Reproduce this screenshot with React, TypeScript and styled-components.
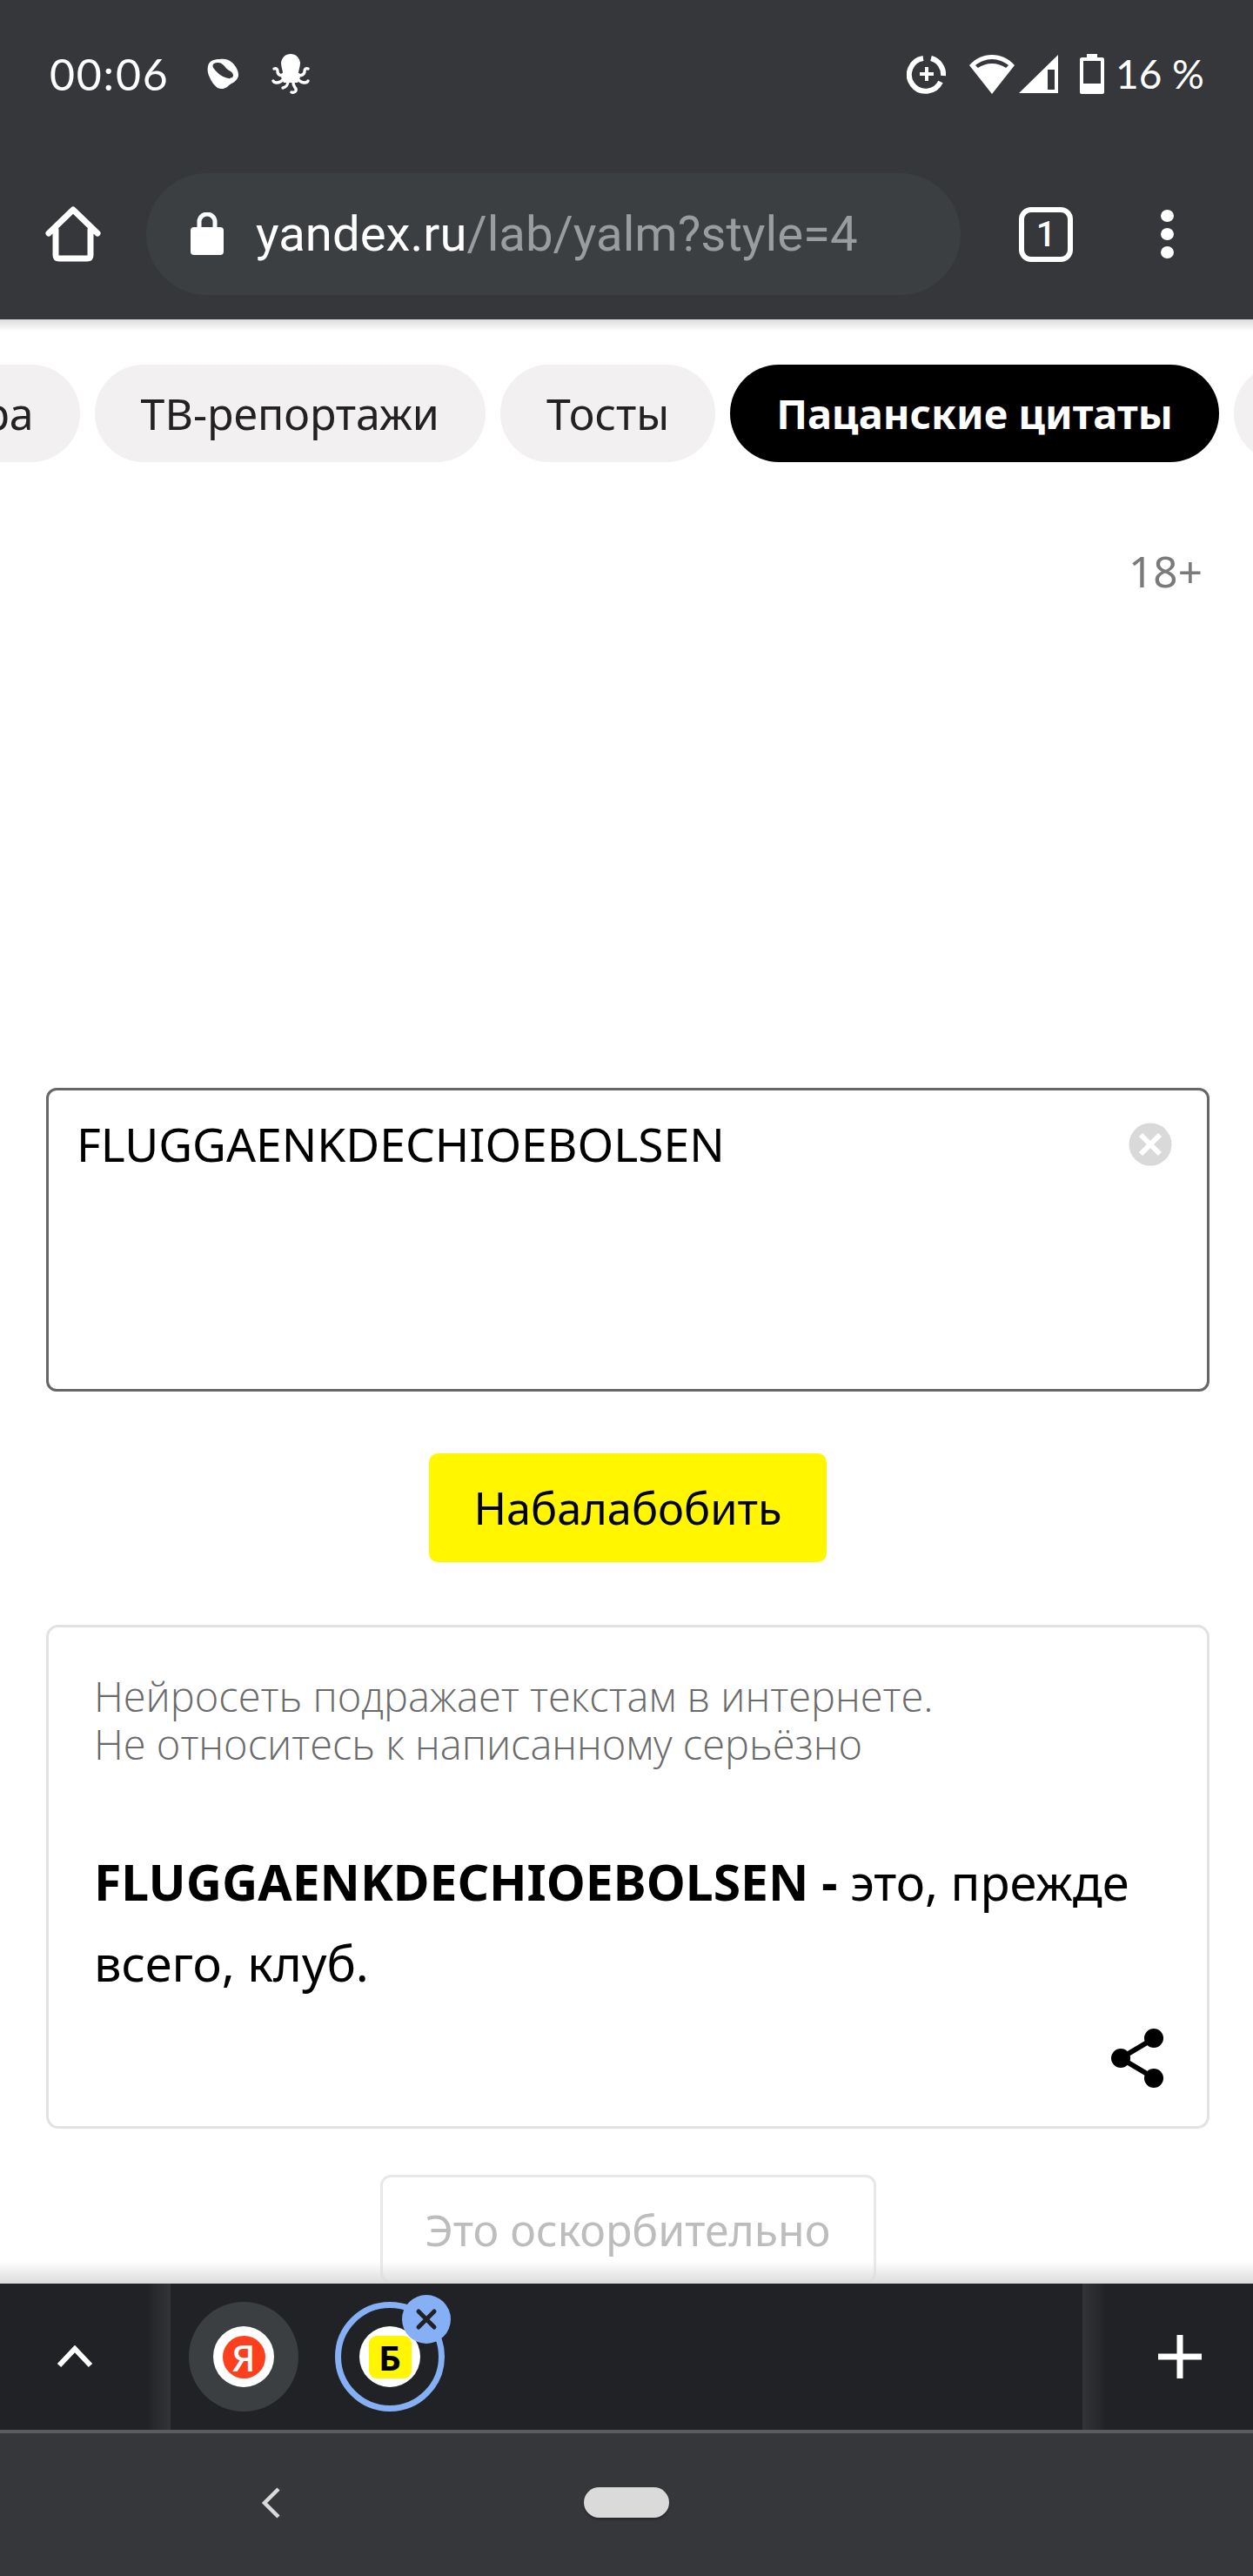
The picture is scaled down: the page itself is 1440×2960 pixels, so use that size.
import styled, { createGlobalStyle } from "styled-components";

const GlobalStyle = createGlobalStyle`
    html, body {
        margin: 0;
        padding: 0;
        background: #fff;
    }
    * {
        box-sizing: border-box;
    }
`

function App() {
    const chips = ['Литература', 'ТВ-репортажи', 'Тосты']

    return (
        <>
            <GlobalStyle />
            <Screen>
                <Chrome>
                    <StatusBar>
                        <StatusLeft>
                            <Clock>00:06</Clock>
                            <svg width="37" height="36" viewBox="0 0 37 36">
                                <path fill="#fff" fillRule="evenodd" d="M1 9C2 3 8 1 14 1c6-1 11 0 15 4 4 4 7 9 7 14 0 4-3 7-6 9-3 1-5 3-7 5-3 2-7 3-11 1-4-3-7-7-9-12C1 18 0 13 1 9Zm7-3C6 7 6 10 8 12c3 4 7 8 13 10 3 1 6 2 8 0 2-2 1-5-2-7-3-2-5-3-7-6-2-2-4-4-7-4-2 0-4 0-5 1Z" />
                            </svg>
                            <Octopus viewBox="0 0 44 46" width="44" height="46">
                                <path fill="#fff" d="M22 0c6 0 10 4 11 10 0 5-2 9-2 12l2 5-3 6H14l-3-6 2-5c0-3-2-7-2-12C12 4 16 0 22 0Z" />
                                <g fill="none" stroke="#fff" strokeWidth="3.4" strokeLinecap="round">
                                    <path d="M14 23c-3 3-7 1-7-3 0-2-1-4-4-3" />
                                    <path d="M30 23c3 3 8 1 8-3 0-3 2-4 4-3" />
                                    <path d="M15 28c-3 3-5 5-9 5-2 0-3 0-4-2" />
                                    <path d="M29 28c3 3 5 5 9 5 2 0 3 0 4-2" />
                                    <path d="M19 30c0 5-1 8-6 9" />
                                    <path d="M25 30c-1 5 1 7 3 10 1 3-2 5-5 4" />
                                </g>
                            </Octopus>
                        </StatusLeft>
                        <StatusRight>
                            <svg width="46" height="45" viewBox="0 0 46 45">
                                <path fill="none" stroke="#fff" strokeWidth="6" d="M19 4A19 19 0 1 0 39 31M28 4a19 19 0 0 1 14 20" />
                                <path fill="none" stroke="#fff" strokeWidth="4" d="M23 14v16M15 22h16" />
                            </svg>
                            <WifiIcon width="54" height="45" viewBox="0 0 54 45">
                                <path fill="#fff" d="M27 45 1 12C8 4 17 0 27 0s19 4 26 12Z" />
                                <path fill="#36373b" d="M8 12c5-4 12-7 19-7s14 3 19 7l-3 3c-4-3-10-5-16-5s-12 2-16 5Z" />
                            </WifiIcon>
                            <SignalIcon width="46" height="44" viewBox="0 0 46 44">
                                <path fill="#fff" d="M45 0v44H0Z" />
                                <path fill="#36373b" d="M33 17h8v23h-8Z" />
                            </SignalIcon>
                            <BatteryIcon width="28" height="46" viewBox="0 0 28 46">
                                <path fill="#fff" d="M8 0h12v4h6c1 0 2 1 2 2v38c0 1-1 2-2 2H2c-1 0-2-1-2-2V6c0-1 1-2 2-2h6Z" />
                                <path fill="#36373b" d="M4 8h20v26H4Z" />
                            </BatteryIcon>
                            <Percent>16 %</Percent>
                        </StatusRight>
                    </StatusBar>
                    <Toolbar>
                        <HomeIcon width="64" height="64" viewBox="0 0 64 64">
                            <path fill="none" stroke="#fff" strokeWidth="7" strokeLinejoin="round" strokeLinecap="round" d="M4 31 32 4l28 27M12 27v29c0 3 1 4 4 4h32c3 0 4-1 4-4V27" />
                        </HomeIcon>
                        <AddressPill>
                            <svg width="38" height="50" viewBox="0 0 38 50">
                                <path fill="none" stroke="#fff" strokeWidth="5" d="M10 20v-9a9 9 0 0 1 18 0v9" />
                                <rect x="0" y="17" width="38" height="32" rx="4" fill="#fff" />
                            </svg>
                            <UrlText>yandex.ru<UrlRest>/lab/yalm?style=4</UrlRest></UrlText>
                        </AddressPill>
                        <TabCounter>1</TabCounter>
                        <MenuDots>
                            <MenuDot />
                            <MenuDot />
                            <MenuDot />
                        </MenuDots>
                    </Toolbar>
                </Chrome>

                <Content>
                    <ChipRow>
                        {chips.map((c) => <Chip key={c}>{c}</Chip>)}
                        <Chip $active>Пацанские цитаты</Chip>
                        <Chip>Ещё</Chip>
                    </ChipRow>
                    <AgeMark>18+</AgeMark>
                    <InputBox>
                        <InputText>FLUGGAENKDECHIOEBOLSEN</InputText>
                        <ClearButton width="50" height="50" viewBox="0 0 50 50">
                            <circle cx="25" cy="25" r="24.5" fill="#d9d9d9" />
                            <path stroke="#fff" strokeWidth="6" d="M14 14l22 22M36 14 14 36" />
                        </ClearButton>
                    </InputBox>
                    <SubmitButton>Набалабобить</SubmitButton>
                    <ResultCard>
                        <Disclaimer>Нейросеть подражает текстам в интернете.<br />Не относитесь к написанному серьёзно</Disclaimer>
                        <ResultText><strong>FLUGGAENKDECHIOEBOLSEN - </strong>это, прежде всего, клуб.</ResultText>
                        <ShareRow>
                            <svg width="60" height="68" viewBox="0 0 60 68">
                                <path fill="none" stroke="#000" strokeWidth="6" d="M11 34 48 12M11 34l37 22" />
                                <circle cx="11" cy="34" r="11" fill="#000" />
                                <circle cx="49" cy="11" r="11" fill="#000" />
                                <circle cx="49" cy="57" r="11" fill="#000" />
                            </svg>
                        </ShareRow>
                    </ResultCard>
                    <ReportButton>Это оскорбительно</ReportButton>
                    <BottomFade />
                </Content>

                <TabStrip>
                    <StripEdge>
                        <svg width="42" height="26" viewBox="0 0 42 26">
                            <path fill="none" stroke="#fff" strokeWidth="6" d="M3 23 21 4l18 19" />
                        </svg>
                    </StripEdge>
                    <StripTabs>
                        <TabBubble>
                            <Favicon>
                                <YandexBadge>Я</YandexBadge>
                            </Favicon>
                        </TabBubble>
                        <TabBubble $selected>
                            <Favicon>
                                <BalabobaBadge>Б</BalabobaBadge>
                            </Favicon>
                            <CloseBadge>
                                <svg width="26" height="26" viewBox="0 0 26 26">
                                    <path stroke="#212226" strokeWidth="5" strokeLinecap="round" d="M4 4l18 18M22 4 4 22" />
                                </svg>
                            </CloseBadge>
                        </TabBubble>
                    </StripTabs>
                    <StripEdge $right>
                        <svg width="50" height="50" viewBox="0 0 50 50">
                            <path stroke="#fff" strokeWidth="7" d="M25 0v50M0 25h50" />
                        </svg>
                    </StripEdge>
                </TabStrip>

                <NavBar>
                    <BackChevron width="22" height="36" viewBox="0 0 22 36">
                        <path fill="none" stroke="#dadada" strokeWidth="4.5" d="M20 2 4 18l16 16" />
                    </BackChevron>
                    <HomePill />
                </NavBar>
            </Screen>
        </>
    )
}

const Screen = styled.div`
    width: 1440px;
    height: 2960px;
    display: flex;
    flex-direction: column;
    overflow: hidden;
    background: #fff;
    font-family: "Noto Sans", sans-serif;
`

const Chrome = styled.div`
    height: 367px;
    flex-shrink: 0;
    background: #36373b;
    display: flex;
    flex-direction: column;
`

const StatusBar = styled.div`
    height: 199px;
    padding: 62px 56px 0 57px;
    display: flex;
    justify-content: space-between;
    align-items: flex-start;
`

const StatusLeft = styled.div`
    display: flex;
    align-items: center;
    height: 46px;
    gap: 47px;
`

const Clock = styled.span`
    font-family: "Lato", sans-serif;
    font-size: 50px;
    line-height: 46px;
    color: #fff;
    width: 134px;
    letter-spacing: 1.8px;
`

const Octopus = styled.svg`
    margin-left: -10px;
`

const StatusRight = styled.div`
    display: flex;
    align-items: center;
    height: 46px;
    gap: 0;
`

const WifiIcon = styled.svg`
    margin-left: 25px;
`

const SignalIcon = styled.svg`
    margin-left: 4px;
`

const BatteryIcon = styled.svg`
    margin-left: 24px;
`

const Percent = styled.span`
    font-family: "Lato", sans-serif;
    font-size: 46px;
    line-height: 46px;
    color: #fff;
    margin-left: 13px;
`

const Toolbar = styled.div`
    height: 140px;
    display: flex;
    align-items: center;
    padding-left: 52px;
`

const HomeIcon = styled.svg`
    flex-shrink: 0;
`

const AddressPill = styled.div`
    width: 936px;
    height: 140px;
    margin-left: 52px;
    border-radius: 70px;
    background: #3c3f42;
    padding-left: 51px;
    display: flex;
    align-items: center;
    gap: 37px;
`

const UrlText = styled.span`
    font-family: "Roboto", sans-serif;
    font-size: 56.3px;
    color: #fff;
    white-space: nowrap;
`

const UrlRest = styled.span`
    color: #9a9c9f;
`

const TabCounter = styled.div`
    width: 62px;
    height: 63px;
    margin-left: 67px;
    border: 6px solid #fff;
    border-radius: 14px;
    color: #fff;
    font-family: "Roboto", sans-serif;
    font-size: 40px;
    font-weight: 500;
    display: flex;
    align-items: center;
    justify-content: center;
`

const MenuDots = styled.div`
    margin-left: 101px;
    display: flex;
    flex-direction: column;
    gap: 7px;
`

const MenuDot = styled.div`
    width: 15px;
    height: 14px;
    border-radius: 50%;
    background: #fff;
`

const Content = styled.div`
    flex: 1;
    min-height: 0;
    position: relative;
    overflow: hidden;
    padding: 52px 50px 0 53px;
    display: flex;
    flex-direction: column;
    & > * {
        flex-shrink: 0;
    }
    &::before {
        content: '';
        position: absolute;
        top: 0;
        left: 0;
        right: 0;
        height: 14px;
        background: linear-gradient(#dcdcdc, #ffffff00);
    }
`

const ChipRow = styled.div`
    display: flex;
    justify-content: flex-end;
    gap: 17px;
    margin-left: -400px;
    margin-right: -234px;
`

const Chip = styled.div<{ $active?: boolean }>`
    flex-shrink: 0;
    height: 112px;
    padding: 0 53px;
    border-radius: 56px;
    display: flex;
    align-items: center;
    font-size: ${(p) => (p.$active ? 47 : 50)}px;
    white-space: nowrap;
    background: ${(p) => (p.$active ? '#000' : '#f2f0f0')};
    color: ${(p) => (p.$active ? '#fff' : '#222')};
    font-weight: ${(p) => (p.$active ? 700 : 400)};
`

const AgeMark = styled.div`
    margin: 95px 8px 0 0;
    align-self: flex-end;
    font-size: 49.5px;
    line-height: 60px;
    color: #7a7a7a;
`

const InputBox = styled.div`
    position: relative;
    margin-top: 564px;
    height: 349px;
    width: 1337px;
    border: 3px solid #666;
    border-radius: 12px;
    padding: 29px 32px;
`

const InputText = styled.div`
    font-size: 53.4px;
    line-height: 66px;
    color: #000;
`

const ClearButton = styled.svg`
    position: absolute;
    top: 37px;
    right: 40px;
`

const SubmitButton = styled.div`
    align-self: center;
    margin-top: 71px;
    width: 457px;
    height: 125px;
    border-radius: 10px;
    background: #fff600;
    color: #000;
    font-size: 50.5px;
    display: flex;
    align-items: center;
    justify-content: center;
`

const ResultCard = styled.div`
    margin-top: 72px;
    width: 1337px;
    height: 579px;
    border: 3px solid #e2e2e2;
    border-radius: 14px;
    padding: 52px 50px 0 52px;
    display: flex;
    flex-direction: column;
`

const Disclaimer = styled.div`
    font-family: "Open Sans", sans-serif;
    font-size: 47px;
    font-weight: 300;
    line-height: 55px;
    color: #6a6a6a;
`

const ResultText = styled.div`
    margin-top: 84px;
    font-size: 56px;
    line-height: 93px;
    color: #000;
    strong {
        font-size: 57px;
        font-weight: 700;
    }
`

const ShareRow = styled.div`
    margin-top: 29px;
    display: flex;
    justify-content: flex-end;
`

const ReportButton = styled.div`
    align-self: center;
    margin-top: 53px;
    width: 570px;
    height: 125px;
    border: 3px solid #e8e8e8;
    border-radius: 12px;
    font-size: 50px;
    color: #bdbdbd;
    display: flex;
    align-items: center;
    justify-content: center;
`

const BottomFade = styled.div`
    position: absolute;
    left: 0;
    right: 0;
    bottom: 0;
    height: 26px;
    background: linear-gradient(#ffffff00, #dcdcdc);
`

const TabStrip = styled.div`
    height: 168px;
    flex-shrink: 0;
    background: #212226;
    display: flex;
`

const StripEdge = styled.div<{ $right?: boolean }>`
    width: 196px;
    display: flex;
    align-items: center;
    justify-content: ${(p) => (p.$right ? 'flex-end' : 'center')};
    padding: ${(p) => (p.$right ? '0 59px 0 0' : '0 24px 0 0')};
    background: ${(p) => (p.$right
        ? 'linear-gradient(90deg, #333437, #212226 28px)'
        : 'linear-gradient(270deg, #333437, #212226 28px)')};
`

const StripTabs = styled.div`
    flex: 1;
    padding: 21px 0 0 21px;
    display: flex;
    align-items: flex-start;
    gap: 42px;
`

const TabBubble = styled.div<{ $selected?: boolean }>`
    position: relative;
    width: 126px;
    height: 126px;
    border-radius: 50%;
    display: flex;
    align-items: center;
    justify-content: center;
    background: ${(p) => (p.$selected ? 'transparent' : '#3c3f42')};
    border: ${(p) => (p.$selected ? '7px solid #86b0f5' : 'none')};
`

const Favicon = styled.div`
    width: 70px;
    height: 70px;
    border-radius: 50%;
    background: #fff;
    display: flex;
    align-items: center;
    justify-content: center;
`

const YandexBadge = styled.div`
    width: 49px;
    height: 49px;
    border-radius: 50%;
    background: #fc3f1d;
    color: #fff;
    font-family: "Noto Sans", sans-serif;
    font-size: 42px;
    font-weight: 500;
    line-height: 49px;
    text-align: center;
`

const BalabobaBadge = styled.div`
    width: 49px;
    height: 49px;
    border-radius: 9px;
    background: #fff600;
    color: #000;
    font-family: "Noto Sans", sans-serif;
    font-size: 40px;
    font-weight: 700;
    line-height: 49px;
    text-align: center;
`

const CloseBadge = styled.div`
    position: absolute;
    top: -15px;
    right: -14px;
    width: 56px;
    height: 56px;
    border-radius: 50%;
    background: #86b0f5;
    display: flex;
    align-items: center;
    justify-content: center;
`

const NavBar = styled.div`
    height: 168px;
    flex-shrink: 0;
    background: #36373b;
    border-top: 4px solid #5a5b5f;
    padding: 62px 0 0 300px;
    display: flex;
    align-items: flex-start;
`

const BackChevron = styled.svg`
    flex-shrink: 0;
`

const HomePill = styled.div`
    margin-left: 349px;
    width: 98px;
    height: 35px;
    border-radius: 18px;
    background: #dadada;
    box-shadow: 0 2px 3px #00000050;
`

export default App;
